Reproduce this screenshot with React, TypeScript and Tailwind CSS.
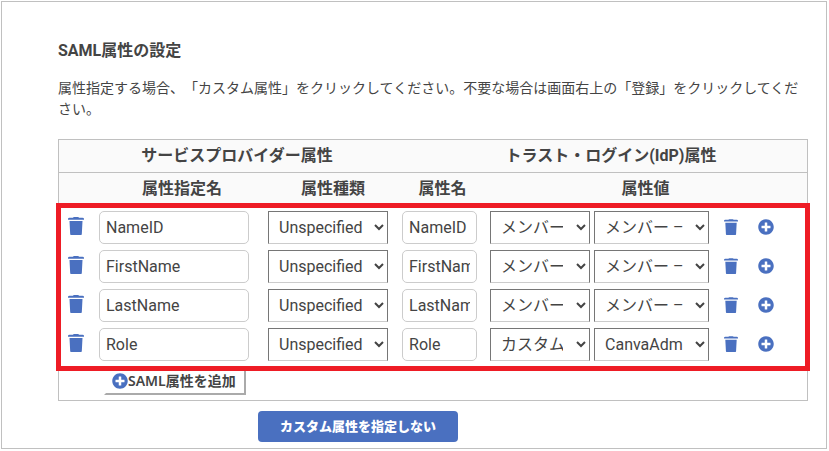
import { useState } from "react";
import { FaPlusCircle } from "react-icons/fa";

type AttributeRow = {
  id: number;
  spName: string;
  kind: string;
  idpName: string;
  source: string;
  value: string;
};

const INITIAL_ROWS: AttributeRow[] = [
  { id: 1, spName: "NameID", kind: "Unspecified", idpName: "NameID", source: "メンバー", value: "メンバー – メールアドレス" },
  { id: 2, spName: "FirstName", kind: "Unspecified", idpName: "FirstName", source: "メンバー", value: "メンバー – 名" },
  { id: 3, spName: "LastName", kind: "Unspecified", idpName: "LastName", source: "メンバー", value: "メンバー – 姓" },
  { id: 4, spName: "Role", kind: "Unspecified", idpName: "Role", source: "カスタム属性", value: "CanvaAdmin" },
];

const cellClass = "pb-1.5 group-first:pt-[5px] group-last:pb-[7px]";
const inputClass = "block h-[33px] w-full rounded-[5px] border border-[#ccc] bg-white px-1.5 text-base";
const selectClass = "block h-[33px] border border-[#767676] border-b-[#ccc] bg-white pl-1.5 text-base";

function TrashIcon({ className }: { className: string }) {
  return (
    <svg viewBox="0 0 16 18" className={className} fill="currentColor" aria-hidden="true">
      <path d="M5 0.8Q5.200 0 6 0h4q.8 0 1 .8h3.500q1.500 0 1.500 1.200v.700H0V2Q0 .8 1.500.8z" />
      <path d="M1.500 4h13l-.7 13.300a.8.700 0 0 1-.8.700H3a.8.700 0 0 1-.8-.7z" />
    </svg>
  );
}

export default function App() {
  const [rows, setRows] = useState(INITIAL_ROWS);

  const removeRow = (id: number) => setRows(rows.filter((r) => r.id !== id));
  const addRow = () =>
    setRows([
      ...rows,
      { id: Date.now(), spName: "", kind: "Unspecified", idpName: "", source: "メンバー", value: "メンバー – 名" },
    ]);

  return (
    <main className="mt-px mr-0.5 mb-0.5 ml-px border border-[#c0c0c0] bg-white pt-[37px] pr-[18px] pb-1.5 pl-14 font-[Roboto,'Noto_Sans_CJK_JP',sans-serif] text-[#444] [text-spacing-trim:space-all]">
      <h1 className="text-base leading-6 font-bold">SAML属性の設定</h1>
      <p className="mt-[15px] text-sm leading-[21px]">
        属性指定する場合、「カスタム属性」をクリックしてください。不要な場合は画面右上の「登録」をクリックしてください。
      </p>

      <table className="mt-[19px] w-full table-fixed border-separate border-spacing-0 border border-[#c0c0c0]">
        <colgroup>
          <col className="w-10" />
          <col className="w-[166px]" />
          <col className="w-[136px]" />
          <col className="w-[83px]" />
          <col />
        </colgroup>
        <thead className="bg-[#fafafa] leading-8">
          <tr>
            <th colSpan={3} className="border-b border-[#c0c0c0] pl-3.5">サービスプロバイダー属性</th>
            <th colSpan={2} className="border-b border-[#c0c0c0] pl-3.5">トラスト・ログイン(IdP)属性</th>
          </tr>
          <tr>
            <th colSpan={2} className="pb-px pl-10">属性指定名</th>
            <th className="pb-px">属性種類</th>
            <th className="pb-px">属性名</th>
            <th className="pb-px">属性値</th>
          </tr>
        </thead>

        <tbody className="outline-[5px] -outline-offset-2 outline-[#ee1c25]">
          {rows.map((row) => (
            <tr key={row.id} className="group">
              <td className={`${cellClass} pl-[9px]`}>
                <button type="button" aria-label="削除" onClick={() => removeRow(row.id)} className="mb-1 block text-[#4a70c0]">
                  <TrashIcon className="h-[18px] w-4" />
                </button>
              </td>
              <td className={`${cellClass} pr-4`}>
                <input aria-label="属性指定名" defaultValue={row.spName} className={inputClass} />
              </td>
              <td className={`${cellClass} pl-[3px]`}>
                <select aria-label="属性種類" defaultValue={row.kind} className={`${selectClass} w-[120px] pr-1`}>
                  <option>Unspecified</option>
                </select>
              </td>
              <td className={`${cellClass} pr-[7px] pl-px`}>
                <input aria-label="属性名" defaultValue={row.idpName} className={inputClass} />
              </td>
              <td className={`${cellClass} pl-1.5`}>
                <div className="flex items-center">
                  <select aria-label="属性値の種別" defaultValue={row.source} className={`${selectClass} w-[100px] pr-2.5`}>
                    <option>{row.source}</option>
                  </select>
                  <select aria-label="属性値" defaultValue={row.value} className={`${selectClass} ml-1 w-[115px] pr-[9px]`}>
                    <option>{row.value}</option>
                  </select>
                  <button type="button" aria-label="値を削除" className="mb-0.5 ml-[15px] text-[#4a70c0]">
                    <TrashIcon className="h-4 w-3.5" />
                  </button>
                  <button type="button" aria-label="値を追加" className="mb-0.5 ml-5 text-[#4a70c0]">
                    <FaPlusCircle className="size-4" />
                  </button>
                </div>
              </td>
            </tr>
          ))}
        </tbody>

        <tfoot>
          <tr>
            <td colSpan={5} className="pb-[5px] pl-[45px]">
              <button
                type="button"
                onClick={addRow}
                className="flex h-[27px] items-center border-2 border-t-[#eee] border-r-[#aaa] border-b-[#aaa] border-l-[#fff] pr-2 pb-0.5 pl-1.5 font-['Noto_Sans','Noto_Sans_CJK_JP',sans-serif] text-sm font-semibold"
              >
                <FaPlusCircle className="size-4 text-[#4a70c0]" />
                SAML属性を追加
              </button>
            </td>
          </tr>
        </tfoot>
      </table>

      <div className="mt-2.5 flex pl-[200px]">
        <button type="button" className="h-[31px] w-[200px] rounded bg-[#4a70c0] text-[13px] font-black text-white">
          カスタム属性を指定しない
        </button>
      </div>
    </main>
  );
}
